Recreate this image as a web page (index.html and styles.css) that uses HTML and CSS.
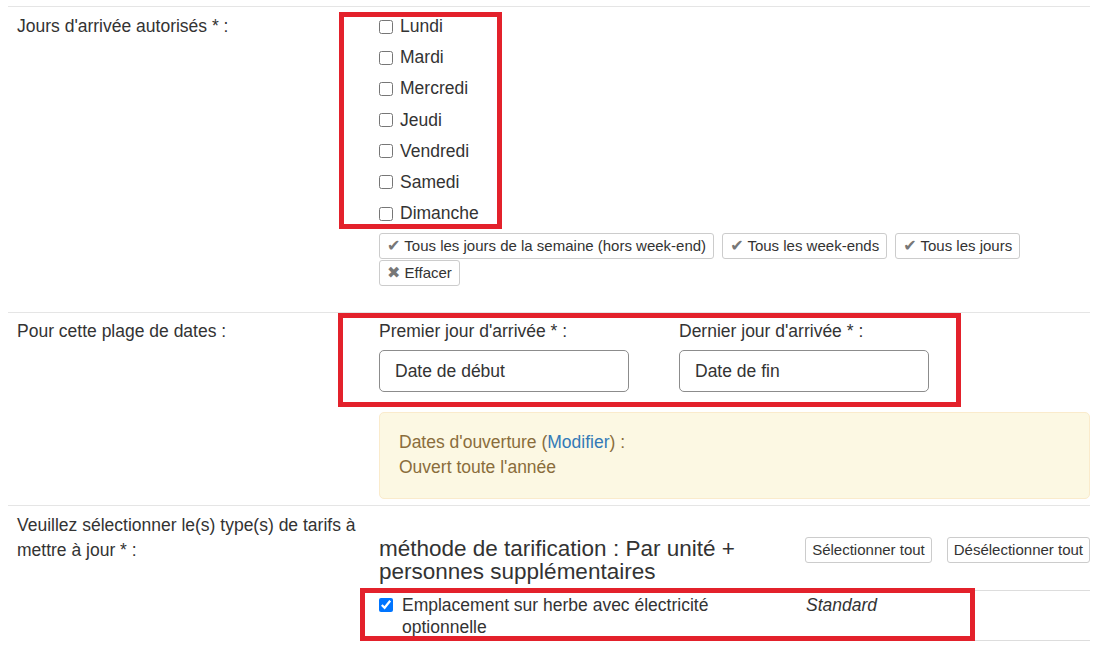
FILE: index.html
```html
<!DOCTYPE html>
<html lang="fr">
<head>
    <meta charset="UTF-8">
    <meta name="viewport" content="width=device-width, initial-scale=1.0">
    <title>Mise à jour des tarifs</title>
    <link rel="stylesheet" href="styles.css">
</head>
<body>
    <div class="page">

        <!-- Jours d'arrivée -->
        <div class="form-row row-days">
            <div class="form-label">Jours d'arrivée autorisés * :</div>
            <div class="form-field">
                <div class="day-list">
                    <label class="check"><input type="checkbox"> Lundi</label>
                    <label class="check"><input type="checkbox"> Mardi</label>
                    <label class="check"><input type="checkbox"> Mercredi</label>
                    <label class="check"><input type="checkbox"> Jeudi</label>
                    <label class="check"><input type="checkbox"> Vendredi</label>
                    <label class="check"><input type="checkbox"> Samedi</label>
                    <label class="check"><input type="checkbox"> Dimanche</label>
                </div>
                <div class="quick-buttons">
                    <button class="btn btn-quick"><span class="icon">✔</span> Tous les jours de la semaine (hors week-end)</button>
                    <button class="btn btn-quick"><span class="icon">✔</span> Tous les week-ends</button>
                    <button class="btn btn-quick"><span class="icon">✔</span> Tous les jours</button>
                    <button class="btn btn-quick"><span class="icon">✖</span> Effacer</button>
                </div>
            </div>
        </div>

        <!-- Plage de dates -->
        <div class="form-row row-dates">
            <div class="form-label">Pour cette plage de dates :</div>
            <div class="form-field">
                <div class="date-fields">
                    <div class="date-col">
                        <label class="date-label">Premier jour d'arrivée * :</label>
                        <input type="text" class="date-input" placeholder="Date de début">
                    </div>
                    <div class="date-col">
                        <label class="date-label">Dernier jour d'arrivée * :</label>
                        <input type="text" class="date-input" placeholder="Date de fin">
                    </div>
                </div>
                <div class="alert">
                    Dates d'ouverture (<a href="#">Modifier</a>) :<br>
                    Ouvert toute l'année
                </div>
            </div>
        </div>

        <!-- Types de tarifs -->
        <div class="form-row row-rates">
            <div class="form-label">Veuillez sélectionner le(s) type(s) de tarifs à mettre à jour * :</div>
            <div class="form-field">
                <div class="rates-head">
                    <h4 class="rates-title">méthode de tarification : Par unité + personnes supplémentaires</h4>
                    <div class="rates-actions">
                        <button class="btn">Sélectionner tout</button>
                        <button class="btn">Désélectionner tout</button>
                    </div>
                </div>
                <div class="rates-table">
                    <div class="rate-row">
                        <label class="rate-name"><input type="checkbox" checked> <span>Emplacement sur herbe avec électricité optionnelle</span></label>
                        <div class="rate-type">Standard</div>
                    </div>
                </div>
            </div>
        </div>

        <!-- annotations -->
        <div class="mark mark-days"></div>
        <div class="mark mark-dates"></div>
        <div class="mark mark-rate"></div>
    </div>
</body>
</html>
```

FILE: styles.css
```css
body {
    margin: 0;
    font-family: "Liberation Sans", Arial, sans-serif;
    font-size: 17.5px;
    line-height: 25px;
    color: #333;
    background-color: #fff;
}
.page {
    position: relative;
    padding: 6px 7px 0 8px;
}
.form-row {
    display: grid;
    grid-template-columns: 371px 1fr;
    border-top: 1px solid #e5e5e5;
}
.form-label {
    padding: 0 15px 0 9px;
}
.row-days {
    padding: 7px 0 26px;
}
.row-dates {
    padding: 6px 0 6px;
}
.row-rates {
    padding: 7px 0 0;
}

/* checkboxes */
.day-list {
    display: flex;
    flex-direction: column;
    gap: 6.2px;
}
.check {
    display: flex;
    align-items: center;
    gap: 7px;
}
input[type="checkbox"] {
    width: 14px;
    height: 14px;
    margin: 0;
}

/* small buttons */
.quick-buttons {
    display: flex;
    flex-wrap: wrap;
    column-gap: 8px;
    row-gap: 1px;
    margin-top: 7px;
}
.btn {
    font-family: "Liberation Sans", Arial, sans-serif;
    font-size: 15px;
    line-height: 22px;
    padding: 1px 6px;
    color: #333;
    background-color: #fff;
    border: 1px solid #ccc;
    border-radius: 3px;
    cursor: pointer;
}
.btn-quick {
    padding: 1px 7px;
}
.btn .icon {
    font-family: "DejaVu Sans", sans-serif;
    font-size: 16px;
    color: #777;
}

/* dates */
.date-fields {
    display: flex;
}
.date-col {
    width: 300px;
    display: flex;
    flex-direction: column;
}
.date-label {
    margin-bottom: 6px;
}
.date-input {
    width: 250px;
    height: 42px;
    box-sizing: border-box;
    padding: 0 15px;
    font-family: "Liberation Sans", Arial, sans-serif;
    font-size: 17.5px;
    color: #333;
    border: 1px solid #8c8c8c;
    border-radius: 5px;
}
.date-input::placeholder {
    color: #333;
}
.alert {
    margin-top: 20px;
    padding: 17px 19px 18px;
    background-color: #fcf8e3;
    border: 1px solid #faebcc;
    border-radius: 5px;
    color: #8a6d3b;
}
.alert a {
    color: #337ab7;
    text-decoration: none;
}

/* rates */
.rates-head {
    display: flex;
    align-items: flex-start;
    margin-top: 24px;
}
.rates-title {
    width: 410px;
    margin: 0;
    font-size: 22.5px;
    font-weight: normal;
    line-height: 23px;
}
.rates-actions {
    margin-left: auto;
    display: flex;
    gap: 15px;
}
.rates-table {
    margin-top: 7px;
    border-top: 1px solid #ddd;
}
.rate-row {
    display: grid;
    grid-template-columns: 427px 1fr;
    padding: 3px 0 2px;
    line-height: 22px;
    border-bottom: 1px solid #ddd;
}
.rate-name {
    display: flex;
    align-items: flex-start;
    gap: 9px;
}
.rate-name span {
    width: 360px;
}
.rate-name input {
    margin-top: 4px;
}
.rate-type {
    font-style: italic;
}

/* red annotation frames */
.mark {
    position: absolute;
    border: 5px solid #e3212b;
    box-sizing: border-box;
}
.mark-days {
    left: 339px;
    top: 12px;
    width: 163px;
    height: 217px;
}
.mark-dates {
    left: 338px;
    top: 313px;
    width: 623px;
    height: 94px;
}
.mark-rate {
    left: 360px;
    top: 588px;
    width: 615px;
    height: 53px;
}
```
